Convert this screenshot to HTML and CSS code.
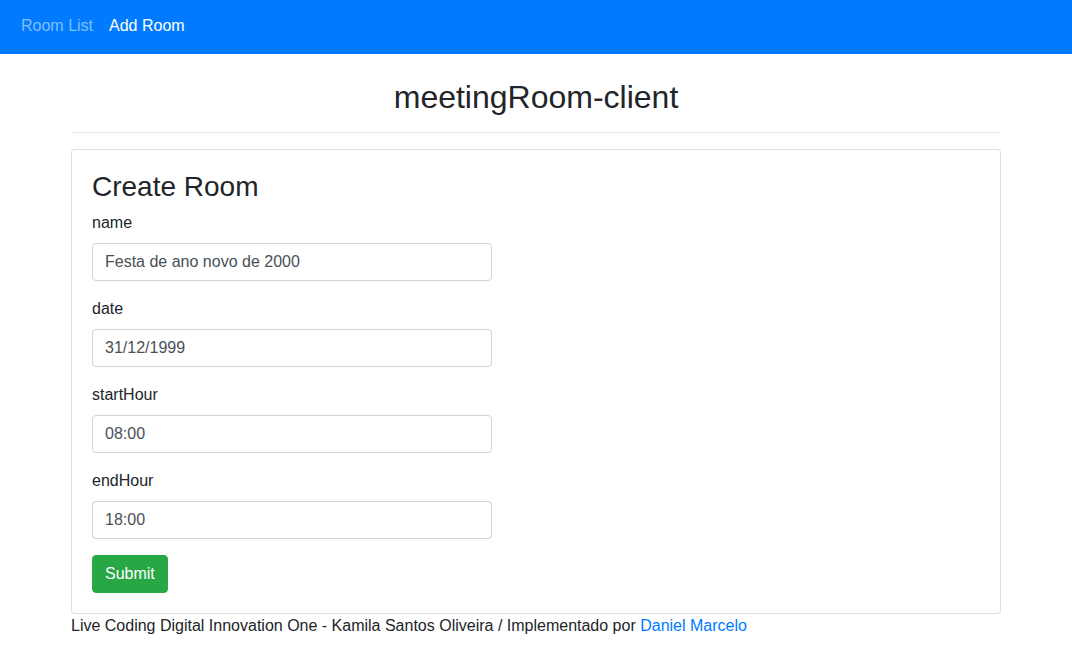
FILE: index.html
```html
<!DOCTYPE html>
<html lang="pt">
<head>
<meta charset="utf-8">
<title>meetingRoom-client</title>
<link rel="stylesheet" href="styles.css">
</head>
<body>
<nav class="navbar">
  <a class="nav-link" href="#">Room List</a>
  <a class="nav-link active" href="#">Add Room</a>
</nav>
<div class="container">
  <h2 class="app-title">meetingRoom-client</h2>
  <hr class="divider">
  <div class="card">
    <div class="card-body">
      <h3 class="card-title">Create Room</h3>
      <form class="room-form">
        <div class="form-group">
          <label class="form-label">name</label>
          <input class="form-control" type="text" value="Festa de ano novo de 2000">
        </div>
        <div class="form-group">
          <label class="form-label">date</label>
          <input class="form-control" type="text" value="31/12/1999">
        </div>
        <div class="form-group">
          <label class="form-label">startHour</label>
          <input class="form-control" type="text" value="08:00">
        </div>
        <div class="form-group">
          <label class="form-label">endHour</label>
          <input class="form-control" type="text" value="18:00">
        </div>
        <button class="btn-success" type="button">Submit</button>
      </form>
    </div>
  </div>
  <footer class="footer">Live Coding Digital Innovation One - Kamila Santos Oliveira / Implementado por <a class="footer-link" href="#">Daniel Marcelo</a></footer>
</div>
</body>
</html>
```

FILE: styles.css
```css
* { box-sizing: border-box; }
html, body { margin: 0; padding: 0; }
body {
  font-family: "Liberation Sans", Arial, Helvetica, sans-serif;
  font-size: 16px;
  line-height: 1.5;
  color: #212529;
  background: #fff;
}
.navbar {
  display: flex;
  align-items: center;
  background: #007bff;
  height: 54px;
  padding: 0 13px;
}
.nav-link {
  display: block;
  padding: 0 8px;
  line-height: 24px;
  color: rgba(255, 255, 255, 0.5);
  text-decoration: none;
  margin-top: -3px;
}
.nav-link.active { color: #fff; }
.container {
  width: 960px;
  margin: 0 auto;
  padding: 24px 15px 0;
}
.app-title {
  margin: 0 0 8px;
  font-size: 32px;
  font-weight: 500;
  line-height: 1.2;
  text-align: center;
}
.divider {
  margin: 16px 0;
  border: 0;
  border-top: 1px solid rgba(0, 0, 0, 0.1);
}
.card {
  border: 1px solid rgba(0, 0, 0, 0.125);
  border-radius: 4px;
  background: #fff;
}
.card-body { padding: 20px; }
.card-title {
  margin: 0 0 7px;
  font-size: 28px;
  font-weight: 500;
  line-height: 1.2;
}
.form-group { margin-bottom: 16px; }
.form-label {
  display: block;
  margin-bottom: 8px;
}
.form-control {
  display: block;
  width: 400px;
  height: 38px;
  padding: 6px 12px;
  font-family: inherit;
  font-size: 16px;
  line-height: 1.5;
  color: #495057;
  background: #fff;
  border: 1px solid #ced4da;
  border-radius: 4px;
}
.btn-success {
  display: block;
  height: 38px;
  padding: 6px 12px;
  font-family: inherit;
  font-size: 16px;
  line-height: 1.5;
  color: #fff;
  background: #28a745;
  border: 1px solid #28a745;
  border-radius: 4px;
}
.footer { line-height: 24px; }
.footer-link { color: #007bff; text-decoration: none; }
```
